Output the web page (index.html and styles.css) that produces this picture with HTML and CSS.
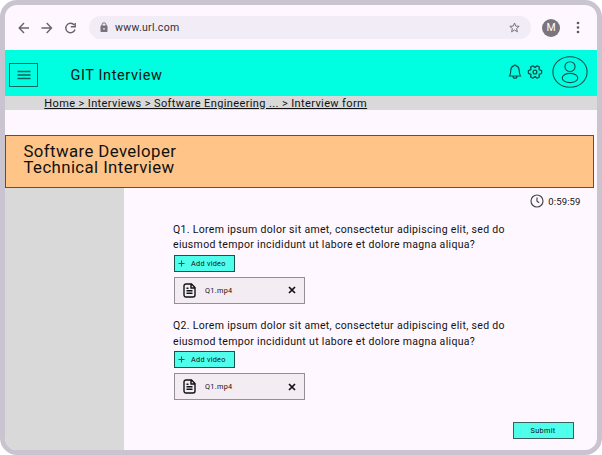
FILE: index.html
```html
<!DOCTYPE html>
<html lang="en">
<head>
<meta charset="utf-8">
<title>GIT Interview</title>
<link rel="stylesheet" href="styles.css">
</head>
<body>
<div class="window">
  <div class="browser-bar">
    <svg class="nav-icons" width="60" height="14" viewBox="0 0 60 14"><path d="M11 7H1.500M6 2L1.200 7L6 12M23.500 7H33.500M28.700 2L33.500 7L28.700 12M56.300 4.200A4.700 4.700 0 1 0 57 8.500M57.200 2V5.700H52.800"/></svg>
    <div class="address">
      <svg class="lock" width="8" height="11" viewBox="0 0 8 11"><path d="M2 4V2.800a2 2 0 0 1 4 0V4" fill="none" stroke="#77717c"/><rect x=".5" y="3.600" width="7" height="6.400" rx=".8" fill="#77717c"/><circle cx="4" cy="6.800" r=".9" fill="#f2ecf6"/></svg>
      <span class="url">www.url.com</span>
      <svg class="star" width="11" height="11" viewBox="0 0 11 11"><path d="M5.500 1L6.800 4.100L10.200 4.300L7.600 6.500L8.400 9.800L5.500 8L2.600 9.800L3.400 6.500L.8 4.300L4.200 4.100Z"/></svg>
    </div>
    <div class="profile">M</div>
    <svg class="dots" width="4" height="13" viewBox="0 0 4 13"><circle cx="2" cy="2" r="1.300"/><circle cx="2" cy="6.500" r="1.300"/><circle cx="2" cy="11" r="1.300"/></svg>
  </div>
  <header class="header">
    <div class="menu"><svg width="14" height="10" viewBox="0 0 14 10"><path d="M.5 1.500H13.500M.5 5H13.500M.5 8.500H13.500"/></svg></div>
    <h1 class="title">GIT Interview</h1>
    <svg class="bell" width="14" height="16" viewBox="0 0 14 16"><path d="M1.500 12C2.700 10.500 2.600 8.500 2.800 6C3 3.700 4.500 2.200 5.800 1.900C6 .8 8 .8 8.200 1.900C9.500 2.200 11 3.700 11.200 6C11.400 8.500 11.300 10.500 12.500 12ZM5 12.200a2 2 0 0 0 4 0"/></svg>
    <svg class="gear" width="16" height="16" viewBox="0 0 16 16"><path d="M5.800 1.800L8 3.400L10.200 1.800L12.400 3.100L12.100 5.600L14.600 6.700V9.300L12.100 10.400L12.400 12.900L10.200 14.200L8 12.600L5.800 14.200L3.600 12.900L3.900 10.400L1.400 9.300V6.700L3.900 5.600L3.600 3.100Z"/><circle cx="8" cy="8" r="1.900"/></svg>
    <svg class="user" width="36" height="32" viewBox="0 0 36 32"><ellipse cx="18" cy="16" rx="17.100" ry="15.300"/><ellipse cx="18" cy="10.600" rx="5.100" ry="4.900"/><ellipse cx="18" cy="22" rx="7.800" ry="4.600"/></svg>
  </header>
  <nav class="crumbs"><span class="crumb-text">Home &gt; Interviews &gt; Software Engineering ... &gt; Interview form</span></nav>
  <section class="banner"><h2>Software Developer<br>Technical Interview</h2></section>
  <div class="body">
    <aside class="sidebar"></aside>
    <main class="main">
      <div class="timer">
        <svg width="14" height="14" viewBox="0 0 14 14"><circle cx="7" cy="7" r="6"/><path d="M7 3.500V7.200L9.200 8.700"/></svg>
        <span class="time">0:59:59</span>
      </div>
      <section class="question">
        <p>Q1. Lorem ipsum dolor sit amet, consectetur adipiscing elit, sed do<br>eiusmod tempor incididunt ut labore et dolore magna aliqua?</p>
        <button class="add"><svg width="7" height="7" viewBox="0 0 7 7"><path d="M3.500 .5V6.500M.5 3.500H6.500"/></svg><span>Add video</span></button>
        <div class="file">
          <svg class="doc" width="13" height="15" viewBox="0 0 13 15"><path d="M3 1H8.500L12 4.500V12a2 2 0 0 1-2 2H3a2 2 0 0 1-2-2V3a2 2 0 0 1 2-2ZM8 1.500V5H12M3.500 5.200H5.500M3.500 7.700H9.500M3.500 10.200H9.500"/></svg>
          <span class="name">Q1.mp4</span>
          <svg class="close" width="8" height="8" viewBox="0 0 8 8"><path d="M1 1L7 7M7 1L1 7"/></svg>
        </div>
      </section>
      <section class="question">
        <p>Q2. Lorem ipsum dolor sit amet, consectetur adipiscing elit, sed do<br>eiusmod tempor incididunt ut labore et dolore magna aliqua?</p>
        <button class="add"><svg width="7" height="7" viewBox="0 0 7 7"><path d="M3.500 .5V6.500M.5 3.500H6.500"/></svg><span>Add video</span></button>
        <div class="file">
          <svg class="doc" width="13" height="15" viewBox="0 0 13 15"><path d="M3 1H8.500L12 4.500V12a2 2 0 0 1-2 2H3a2 2 0 0 1-2-2V3a2 2 0 0 1 2-2ZM8 1.500V5H12M3.500 5.200H5.500M3.500 7.700H9.500M3.500 10.200H9.500"/></svg>
          <span class="name">Q1.mp4</span>
          <svg class="close" width="8" height="8" viewBox="0 0 8 8"><path d="M1 1L7 7M7 1L1 7"/></svg>
        </div>
      </section>
      <button class="submit">Submit</button>
    </main>
  </div>
</div>
</body>
</html>
```
FILE: styles.css
```css
* { box-sizing: border-box; }
body { margin: 0; background: #fff; font-family: Roboto, sans-serif; color: #111; }
h1, h2, p { margin: 0; font-weight: 400; }
svg { display: block; flex: none; fill: none; }
button { font-family: inherit; color: inherit; padding: 0; border-radius: 0; }

.window { width: 602px; height: 455px; border: 5px solid #cac4d0; border-radius: 17px; background: #fef7ff; overflow: hidden; display: flex; flex-direction: column; }

.browser-bar { height: 45px; flex: none; display: flex; align-items: center; padding: 0 17px 0 13px; }
.nav-icons { stroke: #68636d; stroke-width: 1.400; }
.address { width: 442px; height: 23px; margin-left: 11px; border-radius: 12px; background: #f2ecf6; display: flex; align-items: center; padding: 0 11px; }
.url { margin-left: 7px; font-size: 10.500px; letter-spacing: .3px; color: #322f35; }
.star { margin-left: auto; stroke: #77717c; stroke-width: 1; }
.profile { width: 18px; height: 18px; margin-left: 11px; border-radius: 50%; background: #79747e; color: #fff; font-size: 10.500px; line-height: 18px; text-align: center; }
.dots { margin-left: auto; fill: #5b5660; }

.header { height: 45.500px; flex: none; background: #00ffe1; display: flex; align-items: center; padding: 0 9.500px 0 4px; }
.menu { width: 29px; height: 24px; margin-top: 5px; border: 1px solid #12645c; display: flex; align-items: center; justify-content: center; }
.menu svg { stroke: #12645c; stroke-width: 1.300; }
.title { margin: 7px 0 0 32.500px; font-size: 14.500px; line-height: 18px; letter-spacing: .6px; }
.bell { margin: 0 0 2px auto; stroke: #174f4c; stroke-width: 1.200; }
.gear { margin: 0 0 2px 5px; stroke: #174f4c; stroke-width: 1.300; stroke-linejoin: round; }
.user { margin-left: 9px; margin-bottom: 1px; stroke: #174f4c; stroke-width: 1.100; }

.crumbs { height: 14.500px; flex: none; background: #d9d9d9; padding-left: 39.300px; font-size: 11px; line-height: 15px; letter-spacing: .38px; text-decoration: underline; }
.banner { width: 589px; height: 53px; flex: none; margin-top: 25px; border: 1px solid #5c5148; background: #ffc588; padding: 7px 0 0 17.500px; }
.banner h2 { font-size: 16.800px; line-height: 16px; letter-spacing: .4px; }

.body { flex: 1; display: flex; }
.sidebar { width: 118.500px; flex: none; background: #d9d9d9; }
.main { flex: 1; display: flex; flex-direction: column; padding: 6px 16.500px 0 49.500px; }
.timer { display: flex; align-items: center; align-self: flex-end; height: 14px; gap: 4px; font-size: 9.500px; letter-spacing: .12px; }
.timer svg { stroke: #49454f; stroke-width: 1.200; }

.question { height: 96.500px; flex: none; }
.timer + .question { margin-top: 13.500px; }
.question p { font-size: 10.500px; line-height: 15.700px; letter-spacing: .32px; white-space: nowrap; }
.add { width: 61px; height: 17px; margin: 2px 0 0 .5px; border: 1px solid #17544f; background: #4fffeb; display: flex; align-items: center; padding-left: 3px; gap: 6.500px; font-size: 7.300px; letter-spacing: .27px; }
.add svg { stroke: #17544f; stroke-width: 1; }
.file { width: 131px; height: 27px; margin: 5px 0 0 .5px; border: 1px solid #938f96; background: #f3edf3; display: flex; align-items: center; padding: 0 8px; }
.doc { stroke: #111; stroke-width: 1.400; }
.name { margin-left: 9.500px; font-size: 7.300px; letter-spacing: .3px; }
.close { margin-left: auto; stroke: #111; stroke-width: 1.700; }
.submit { width: 61px; height: 17px; align-self: flex-end; margin: 7px 7px 0 0; border: 1px solid #39605e; background: #4fffeb; font-size: 7.300px; letter-spacing: .3px; }
```
